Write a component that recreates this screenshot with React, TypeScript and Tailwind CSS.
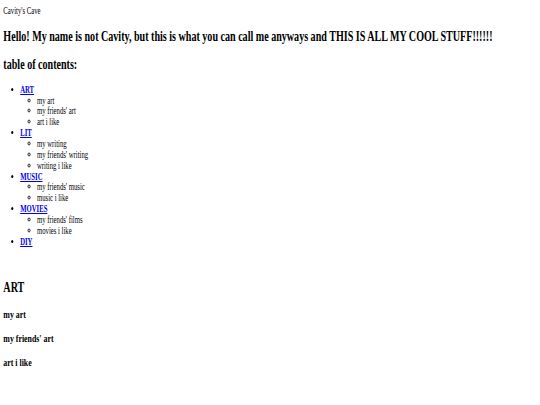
const sections = [
  { title: 'ART', items: ['my art', "my friends' art", 'art i like'] },
  { title: 'LIT', items: ['my writing', "my friends' writing", 'writing i like'] },
  { title: 'MUSIC', items: ["my friends' music", 'music i like'] },
  { title: 'MOVIES', items: ["my friends' films", 'movies i like'] },
  { title: 'DIY', items: [] as string[] },
];

export default function App() {
  return (
    <div className="w-[540px] h-[405px] overflow-hidden bg-white">
      {/* the page reads as a squeezed-down render, so squash it sideways */}
      <div className="w-[771px] origin-top-left scale-x-[0.7] p-[4.8px] text-[9.6px] leading-[1.15] text-black font-['Liberation_Serif','Times_New_Roman',serif]">
        <div>Cavity's Cave</div>

        <h2 className="text-[1.5em] font-bold my-[0.83em]">
          Hello! My name is not Cavity, but this is what you can call me anyways and THIS IS ALL MY COOL STUFF!!!!!!
        </h2>

        <h2 className="text-[1.5em] font-bold my-[0.83em]">table of contents:</h2>

        <ul className="list-disc pl-[24px] my-[1em] leading-[10.85px]">
          {sections.map(section => (
            <li key={section.title}>
              <a href="#" className="font-bold text-[#0000ee] underline">
                {section.title}
              </a>
              {section.items.length > 0 && (
                <ul className="list-[circle] pl-[24px]">
                  {section.items.map(item => (
                    <li key={item}>{item}</li>
                  ))}
                </ul>
              )}
            </li>
          ))}
        </ul>

        <h2 className="text-[1.5em] font-bold mt-[32px] mb-[0.83em]">ART</h2>
        <h3 className="text-[1.17em] font-bold my-[1em]">my art</h3>
        <h3 className="text-[1.17em] font-bold my-[1em]">my friends' art</h3>
        <h3 className="text-[1.17em] font-bold my-[1em]">art i like</h3>
      </div>
    </div>
  );
}
